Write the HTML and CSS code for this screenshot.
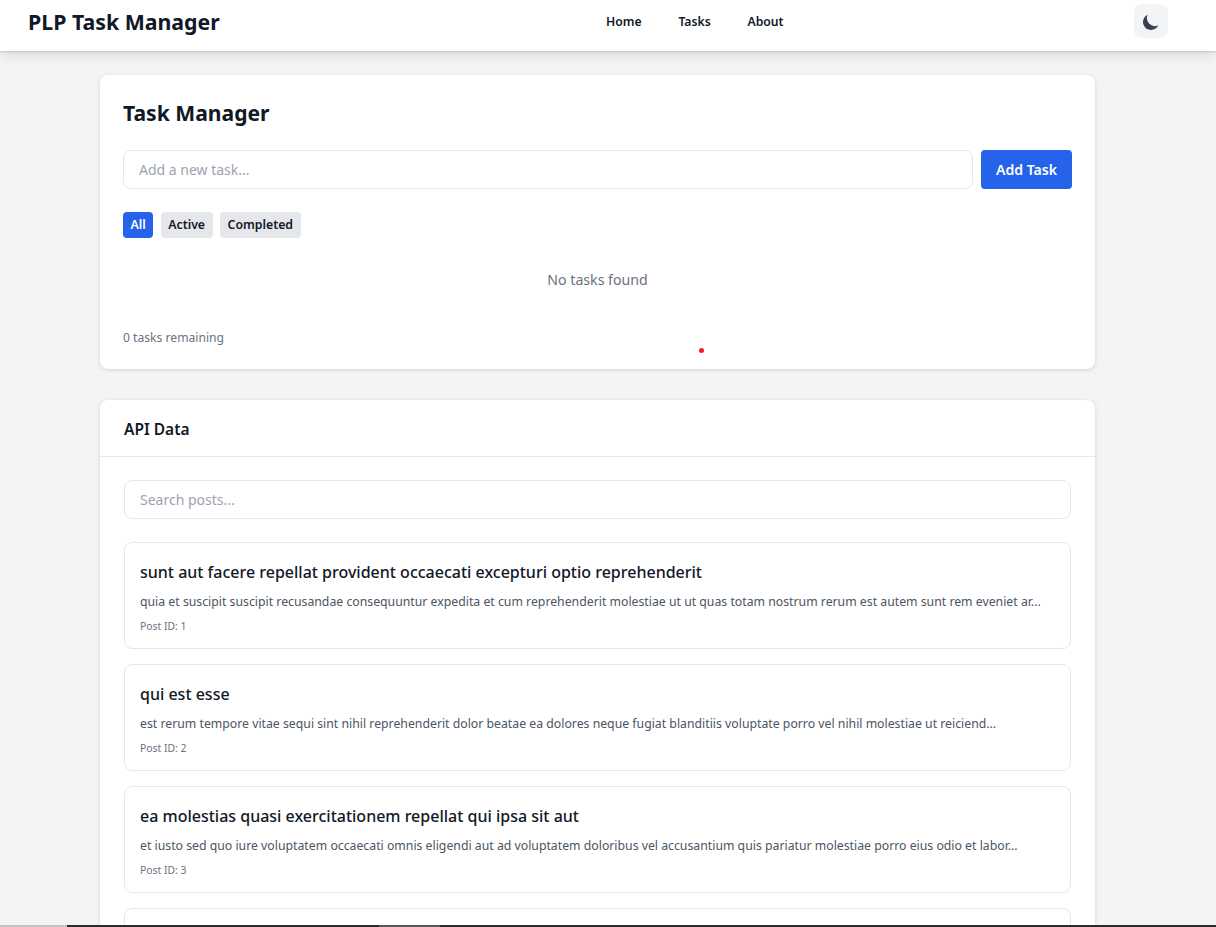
FILE: index.html
```html
<!DOCTYPE html>
<html lang="en">
<head>
  <meta charset="UTF-8" />
  <meta name="viewport" content="width=device-width, initial-scale=1.0"/>
  <title>PLP Task Manager</title>
  <link rel="stylesheet" href="styles.css">
</head>
<body>
  <nav class="navbar">
    <div class="logo">PLP Task Manager</div>
    <div class="nav-links">
      <a href="#">Home</a>
      <a href="#">Tasks</a>
      <a href="#">About</a>
    </div>
    <button class="theme-btn" aria-label="Toggle theme">
      <svg viewBox="0 0 20 20" width="20" height="20"><path d="M17.3 13.3A8 8 0 0 1 6.7 2.7a8 8 0 1 0 10.6 10.6z" fill="#374151"/></svg>
    </button>
  </nav>

  <main class="content">
    <section class="card tasks">
      <h2>Task Manager</h2>
      <div class="add-row">
        <input class="field" type="text" placeholder="Add a new task..." />
        <button class="btn">Add Task</button>
      </div>
      <div class="filters">
        <button class="filter on">All</button>
        <button class="filter">Active</button>
        <button class="filter">Completed</button>
      </div>
      <p class="empty">No tasks found</p>
      <p class="remaining">0 tasks remaining</p>
      <span class="dot"></span>
    </section>

    <section class="card api">
      <h3 class="api-head">API Data</h3>
      <div class="api-body">
        <input class="field" type="text" placeholder="Search posts..." />
        <div class="posts">
          <article class="post">
            <h4>sunt aut facere repellat provident occaecati excepturi optio reprehenderit</h4>
            <p>quia et suscipit suscipit recusandae consequuntur expedita et cum reprehenderit molestiae ut ut quas totam nostrum rerum est autem sunt rem eveniet ar...</p>
            <small>Post ID: 1</small>
          </article>
          <article class="post">
            <h4>qui est esse</h4>
            <p>est rerum tempore vitae sequi sint nihil reprehenderit dolor beatae ea dolores neque fugiat blanditiis voluptate porro vel nihil molestiae ut reiciend...</p>
            <small>Post ID: 2</small>
          </article>
          <article class="post">
            <h4>ea molestias quasi exercitationem repellat qui ipsa sit aut</h4>
            <p>et iusto sed quo iure voluptatem occaecati omnis eligendi aut ad voluptatem doloribus vel accusantium quis pariatur molestiae porro eius odio et labor...</p>
            <small>Post ID: 3</small>
          </article>
          <article class="post"></article>
        </div>
      </div>
    </section>
  </main>

  <div class="edge-bar"><span class="edge-light"></span><span class="edge-dark"></span><span class="edge-mid"></span><span class="edge-dark grow"></span></div>
</body>
</html>
```

FILE: styles.css
```css
* {
  box-sizing: border-box;
}
html, body {
  height: 927px;
  overflow: hidden;
}
body {
  margin: 0;
  background: #f3f4f6;
  color: #111827;
  font-family: "Noto Sans", "Open Sans", sans-serif;
}
.navbar {
  height: 51px;
  background: #fff;
  box-shadow: 0 1px 2px rgba(0, 0, 0, 0.14), 0 4px 12px rgba(0, 0, 0, 0.1);
  display: flex;
  align-items: flex-start;
  position: relative;
  padding: 4px 48px 0 28px;
}
.logo {
  font-size: 21.3px;
  font-weight: 700;
  line-height: 35px;
  width: 578px;
}
.nav-links {
  display: flex;
  gap: 36.8px;
  width: 528px;
}
.nav-links a {
  color: #111827;
  font-size: 12.2px;
  font-weight: 600;
  line-height: 36px;
  text-decoration: none;
}
.theme-btn {
  width: 34px;
  height: 34px;
  border: none;
  border-radius: 8px;
  background: #f3f4f6;
  padding: 2px 1px 0 0;
  display: flex;
  align-items: center;
  justify-content: center;
}
.content {
  padding: 24px 121px 0 100px;
}
.card {
  background: #fff;
  border-radius: 8px;
  box-shadow: 0 1px 4px rgba(0, 0, 0, 0.14);
}
.tasks {
  height: 294px;
  padding: 22px 23px 23px;
  position: relative;
  margin-bottom: 31px;
}
.tasks h2 {
  margin: 0 0 21px;
  font-size: 21.1px;
  line-height: 32px;
  font-weight: 700;
}
.add-row {
  display: flex;
  gap: 8px;
}
.field {
  flex: 1;
  width: 100%;
  height: 39px;
  display: block;
  border: 1px solid #e5e7eb;
  border-radius: 8px;
  padding: 0 15px;
  font-family: inherit;
  font-size: 14px;
  background: #fff;
  outline: none;
}
.field::placeholder {
  color: #9ca3af;
}
.btn {
  width: 91px;
  height: 39px;
  border: none;
  border-radius: 4px;
  background: #2563eb;
  color: #fff;
  font-family: inherit;
  font-size: 14.1px;
  font-weight: 600;
  padding: 0;
}
.filters {
  display: flex;
  gap: 7.5px;
  margin-top: 23px;
}
.filter {
  height: 26px;
  border: none;
  border-radius: 4px;
  background: #e5e7eb;
  color: #111827;
  font-family: inherit;
  font-size: 12.3px;
  font-weight: 600;
  padding: 0 7.5px 2px;
}
.filter.on {
  background: #2563eb;
  color: #fff;
}
.empty {
  margin: 30px 0 0;
  text-align: center;
  color: #6b7280;
  font-size: 14.15px;
  line-height: 24px;
}
.remaining {
  margin: 36px 0 0;
  color: #6b7280;
  font-size: 12.15px;
  line-height: 20px;
}
.dot {
  position: absolute;
  left: 599px;
  top: 273px;
  width: 5px;
  height: 5px;
  border-radius: 50%;
  background: #ef1c24;
}
.api {
  height: 600px;
}
.api-head {
  margin: 0;
  height: 57px;
  padding: 0 24px;
  border-bottom: 1px solid #e5e7eb;
  font-size: 15.5px;
  font-weight: 600;
  line-height: 58px;
}
.api-body {
  padding: 23px 24px;
}
.posts {
  margin-top: 23px;
  display: flex;
  flex-direction: column;
  gap: 15px;
}
.post {
  height: 107px;
  border: 1px solid #e5e7eb;
  border-radius: 8px;
  padding: 15px;
  flex: none;
}
.post h4 {
  margin: 0;
  font-size: 16px;
  font-weight: 500;
  line-height: 28px;
}
.post p {
  margin: 6px 0 0;
  color: #4b5563;
  font-size: 12.28px;
  line-height: 20px;
  white-space: nowrap;
}
.post small {
  display: block;
  margin-top: 6px;
  color: #6b7280;
  font-size: 10.4px;
  line-height: 16px;
}
.edge-bar {
  position: fixed;
  left: 0;
  right: 0;
  bottom: 0;
  height: 2px;
  display: flex;
}
.edge-light {
  width: 67px;
  background: #c4c4c4;
}
.edge-dark {
  width: 312px;
  background: #2b2b2b;
}
.edge-dark.grow {
  flex: 1;
}
.edge-mid {
  width: 61px;
  background: #555;
}
```
